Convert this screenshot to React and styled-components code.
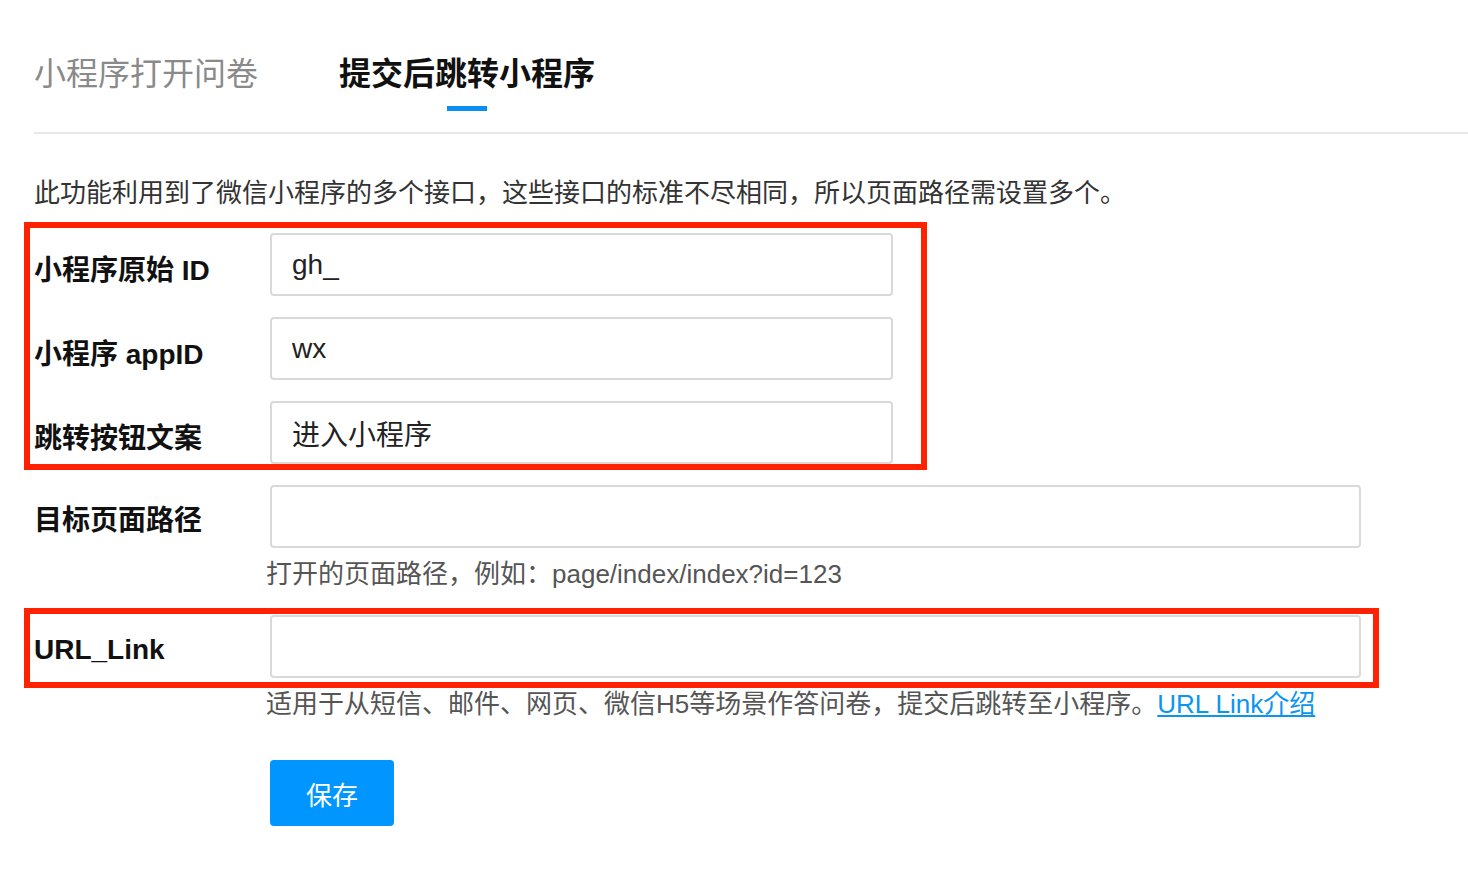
import React, { useState } from 'react';
import styled, { createGlobalStyle } from 'styled-components';

const GlobalStyle = createGlobalStyle`
  body {
    margin: 0;
    background: #fff;
    font-family: "Liberation Sans", "Noto Sans CJK SC", sans-serif;
    color: #1a1a1a;
  }
`;

const Page = styled.div`
  padding: 52px 0 40px 34px;
`;

const Tabs = styled.div`
  display: flex;
  gap: 81px;
  border-bottom: 2px solid #e8e8e8;
  padding-bottom: 21px;
`;

const Tab = styled.div`
  display: flex;
  flex-direction: column;
  align-items: center;
  font-size: 32px;
  line-height: 44px;
  font-weight: ${p => (p.$active ? 700 : 400)};
  color: ${p => (p.$active ? '#111' : '#8a8a8a')};
  cursor: pointer;

  &::after {
    content: '';
    display: block;
    width: 40px;
    height: 5px;
    margin-top: 10px;
    background: ${p => (p.$active ? '#0a8ff0' : 'transparent')};
  }
`;

const Intro = styled.p`
  margin: 41px 0 22px;
  font-size: 26px;
  line-height: 36px;
  color: #333;
`;

const Form = styled.div`
  display: flex;
  flex-direction: column;
  gap: 21px;
`;

// red annotation frame, sits over the rows it marks
const Marked = styled.div`
  position: relative;
  display: flex;
  flex-direction: column;
  gap: 21px;

  &::after {
    content: '';
    position: absolute;
    left: -10px;
    top: ${p => p.$top}px;
    right: ${p => p.$right}px;
    bottom: ${p => p.$bottom}px;
    border: 6px solid #ff2200;
    pointer-events: none;
  }
`;

const Row = styled.div`
  display: flex;
  align-items: ${p => (p.$top ? 'flex-start' : 'center')};
`;

const Label = styled.label`
  width: 236px;
  flex-shrink: 0;
  font-size: 28px;
  font-weight: 700;
  color: #111;
  padding-top: ${p => (p.$top ? 4 : 6)}px;
  line-height: ${p => (p.$top ? '63px' : 'normal')};
`;

const Field = styled.div`
  display: flex;
  flex-direction: column;
  margin-top: ${p => p.$gap || 0}px;
`;

const Input = styled.input`
  box-sizing: border-box;
  width: ${p => p.$width}px;
  height: 63px;
  border: 2px solid #d9d9d9;
  border-radius: 4px;
  padding: 0 20px;
  font-family: "Liberation Sans", "Noto Sans CJK SC", sans-serif;
  font-size: 28px;
  color: #222;
  outline: none;
  background: #fff;
`;

const Hint = styled.div`
  margin: 12px 0 0 ${p => p.$indent || -4}px;
  font-size: 26px;
  line-height: 28px;
  color: #555;

  a {
    color: #0a96f0;
    text-decoration: underline;
  }
`;

const Actions = styled.div`
  padding: 42px 0 0 236px;
`;

const SaveButton = styled.button`
  width: 124px;
  height: 66px;
  border: none;
  border-radius: 4px;
  background: #0095ff;
  color: #fff;
  font-family: "Liberation Sans", "Noto Sans CJK SC", sans-serif;
  font-size: 26px;
  cursor: pointer;
`;

export default function App() {
  const [tab, setTab] = useState(1);
  const [form, setForm] = useState({
    rawId: 'gh_',
    appId: 'wx',
    btnText: '进入小程序',
    path: '',
    urlLink: '',
  });

  function update(key) {
    return e => setForm({ ...form, [key]: e.target.value });
  }

  return (
    <Page>
      <GlobalStyle />
      <Tabs>
        <Tab $active={tab === 0} onClick={() => setTab(0)}>小程序打开问卷</Tab>
        <Tab $active={tab === 1} onClick={() => setTab(1)}>提交后跳转小程序</Tab>
      </Tabs>

      <Intro>此功能利用到了微信小程序的多个接口，这些接口的标准不尽相同，所以页面路径需设置多个。</Intro>

      <Form>
        <Marked $top={-11} $right={541} $bottom={-6}>
          <Row>
            <Label>小程序原始 ID</Label>
            <Input $width={623} value={form.rawId} onChange={update('rawId')} />
          </Row>
          <Row>
            <Label>小程序 appID</Label>
            <Input $width={623} value={form.appId} onChange={update('appId')} />
          </Row>
          <Row>
            <Label>跳转按钮文案</Label>
            <Input $width={623} value={form.btnText} onChange={update('btnText')} />
          </Row>
        </Marked>

        <Row $top>
          <Label $top>目标页面路径</Label>
          <Field>
            <Input $width={1091} value={form.path} onChange={update('path')} />
            <Hint>打开的页面路径，例如：page/index/index?id=123</Hint>
          </Field>
        </Row>

        <Field $gap={6}>
          <Marked $top={-7} $right={89} $bottom={-10}>
            <Row>
              <Label>URL_Link</Label>
              <Input $width={1091} value={form.urlLink} onChange={update('urlLink')} />
            </Row>
          </Marked>
          <Hint $indent={232}>
            适用于从短信、邮件、网页、微信H5等场景作答问卷，提交后跳转至小程序。<a href="#">URL Link介绍</a>
          </Hint>
        </Field>
      </Form>

      <Actions>
        <SaveButton>保存</SaveButton>
      </Actions>
    </Page>
  );
}
